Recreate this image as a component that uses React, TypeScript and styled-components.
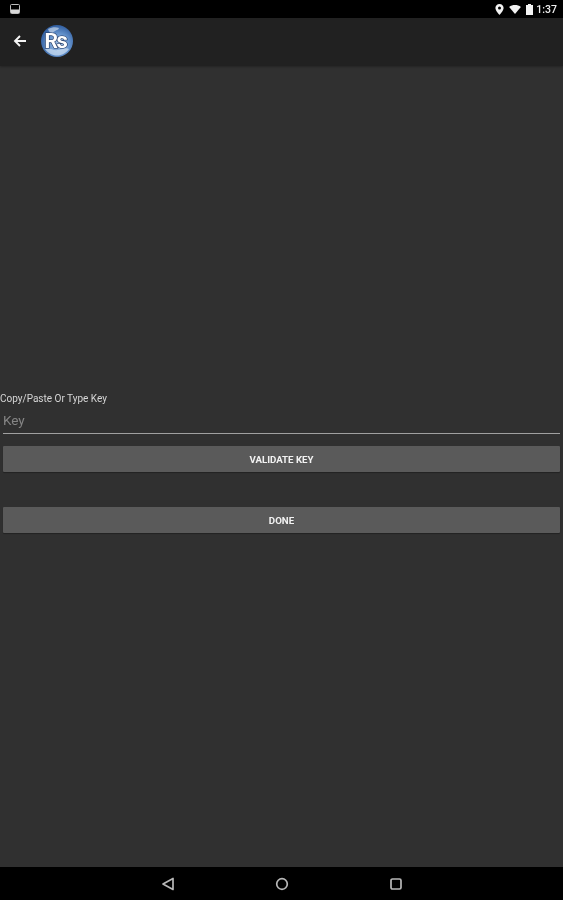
import React from "react";
import styled, { createGlobalStyle } from "styled-components";

const GlobalStyle = createGlobalStyle`
  html, body {
    margin: 0;
    padding: 0;
    background: #303030;
    font-family: "Roboto", "Liberation Sans", sans-serif;
  }
`;

function App() {
  return (
    <>
      <GlobalStyle />
      <Screen>
        <StatusBar>
          <svg width="10" height="10" viewBox="0 0 10 10">
            <rect x="0.5" y="0.5" width="9" height="9" rx="1" fill="none" stroke="#bdbdbd" />
            <rect x="1" y="5.5" width="8" height="3.5" fill="#d8d8d8" />
          </svg>
          <StatusRight>
            <svg width="9" height="11" viewBox="0 0 9 11">
              <path d="M4.5 0C2 0 0.4 1.8 0.4 4c0 2.8 4.1 7 4.1 7s4.1-4.2 4.1-7C8.6 1.8 7 0 4.5 0zm0 5.4A1.5 1.500 0 1 1 4.5 2.4a1.5 1.500 0 0 1 0 3z" fill="#f2f2f2" />
            </svg>
            <svg width="12" height="9" viewBox="0 0 13 10">
              <path d="M0 2.2C3.6-.7 9.4-.7 13 2.2L6.5 10z" fill="#f2f2f2" />
            </svg>
            <svg width="7" height="11" viewBox="0 0 7 11">
              <path d="M2 0h3v1h2v10H0V1h2z" fill="#f2f2f2" />
            </svg>
            <Clock>1:37</Clock>
          </StatusRight>
        </StatusBar>

        <AppBar>
          <svg width="14" height="14" viewBox="0 0 14 14">
            <path d="M13 7H2.5M7 2 2 7l5 5" fill="none" stroke="#f5f5f5" strokeWidth="1.9" />
          </svg>
          <svg width="34" height="34" viewBox="0 0 34 34">
            <defs>
              <radialGradient id="globe" cx="0.55" cy="0.6" r="0.6">
                <stop offset="0" stopColor="#a9c6e8" />
                <stop offset="0.55" stopColor="#6593cc" />
                <stop offset="1" stopColor="#2f5c9e" />
              </radialGradient>
            </defs>
            <circle cx="17" cy="17" r="16" fill="url(#globe)" />
            <path d="M8 5c4-2 8-2 11-1-1 3-5 2-6 5-2 1-4-1-5-4z" fill="#dce8f5" opacity="0.6" />
            <path d="M5 25c5-2 8 2 13 1s8-3 11-1c-3 4-7 6.500-12 6.500S8 29 5 25z" fill="#c9dcf0" opacity="0.75" />
            <LogoText x="4.500" y="24" fontSize="21">R</LogoText>
            <LogoText x="16.500" y="24" fontSize="22">s</LogoText>
          </svg>
        </AppBar>

        <Body>
          <Form>
            <KeyLabel>Copy/Paste Or Type Key</KeyLabel>
            <KeyInput placeholder="Key" readOnly />
            <ActionButton>VALIDATE KEY</ActionButton>
            <ActionButton $spaced>DONE</ActionButton>
          </Form>
        </Body>

        <NavBar>
          <svg width="14" height="14" viewBox="0 0 14 14">
            <path d="M12 1.500v11L2 7z" fill="none" stroke="#b8b8b8" strokeWidth="1.700" strokeLinejoin="round" />
          </svg>
          <svg width="14" height="14" viewBox="0 0 14 14">
            <circle cx="7" cy="7" r="5.300" fill="none" stroke="#b8b8b8" strokeWidth="1.700" />
          </svg>
          <svg width="14" height="14" viewBox="0 0 14 14">
            <rect x="2" y="2" width="10" height="10" rx="1.500" fill="none" stroke="#b8b8b8" strokeWidth="1.700" />
          </svg>
        </NavBar>
      </Screen>
    </>
  );
}

const Screen = styled.div`
  width: 563px;
  height: 900px;
  display: flex;
  flex-direction: column;
  overflow: hidden;
  background: #303030;
  filter: blur(0.45px);
`;

const StatusBar = styled.div`
  height: 18px;
  flex-shrink: 0;
  background: #000;
  display: flex;
  align-items: center;
  justify-content: space-between;
  padding: 0 6px 0 10px;
`;

const StatusRight = styled.div`
  display: flex;
  align-items: center;
  gap: 5px;
`;

const Clock = styled.span`
  margin-left: -2px;
  font-size: 10.5px;
  font-weight: 500;
  color: #eeeeee;
`;

const AppBar = styled.div`
  height: 48px;
  flex-shrink: 0;
  background: #212121;
  display: flex;
  align-items: center;
  gap: 13px;
  padding: 0 0 2px 13px;
  box-sizing: border-box;
  box-shadow: 0 1px 2px rgba(0, 0, 0, 0.25);
`;

const LogoText = styled.text`
  font-family: "Roboto", sans-serif;
  font-weight: 700;
  fill: #ffffff;
  stroke: #1d3560;
  stroke-width: 1.2px;
  paint-order: stroke;
`;

const Body = styled.div`
  flex: 1;
  padding-top: 326px;
`;

const Form = styled.div`
  display: flex;
  flex-direction: column;
`;

const KeyLabel = styled.div`
  font-size: 10px;
  line-height: 13px;
  color: #d6d6d6;
`;

const KeyInput = styled.input`
  margin: 2px 3px 0;
  height: 26px;
  padding: 0;
  background: transparent;
  border: none;
  border-bottom: 1px solid #a0a0a0;
  outline: none;
  font-family: inherit;
  font-size: 13.5px;
  color: #e0e0e0;

  &::placeholder {
    color: #858585;
  }
`;

const ActionButton = styled.button<{ $spaced?: boolean }>`
  margin: ${(p) => (p.$spaced ? "35px" : "12px")} 3px 0;
  height: 26px;
  padding: 0;
  border: none;
  border-radius: 1px;
  background: #5a5a5a;
  box-shadow: 0 1px 1px rgba(0, 0, 0, 0.3);
  font-family: inherit;
  font-size: 9.7px;
  font-weight: 700;
  color: #f2f2f2;
`;

const NavBar = styled.div`
  height: 33px;
  flex-shrink: 0;
  background: #000;
  display: flex;
  align-items: center;
  justify-content: center;
  gap: 100px;
`;

export default App;
